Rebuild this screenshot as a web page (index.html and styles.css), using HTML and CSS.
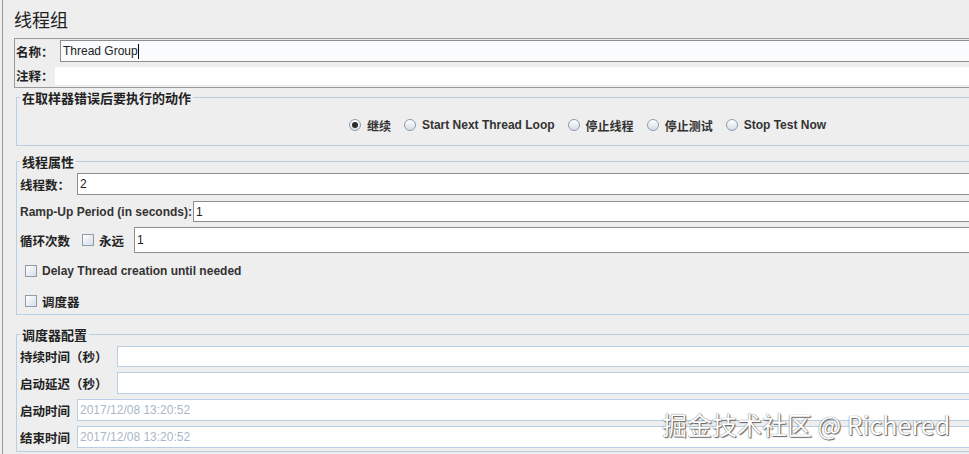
FILE: index.html
```html
<!DOCTYPE html>
<html lang="zh-CN">
  <head>
    <meta charset="UTF-8" />
    <meta name="viewport" content="width=device-width, initial-scale=1.0" />
    <title>线程组</title>
    <link rel="stylesheet" href="styles.css">
  </head>
  <body>
    <div class="frame">
      <h1 class="title">线程组</h1>

      <div class="names">
        <div class="names-row">
          <span class="lbl name-lbl">名称：</span>
          <div class="field name-field">Thread Group<span class="caret"></span></div>
        </div>
        <div class="names-row second">
          <span class="lbl note-lbl">注释：</span>
          <div class="field note-field"></div>
        </div>
      </div>

      <fieldset class="group on-error">
        <legend>在取样器错误后要执行的动作</legend>
        <div class="options">
          <div class="opt"><span class="radio on"></span>继续</div>
          <div class="opt"><span class="radio"></span>Start Next Thread Loop</div>
          <div class="opt"><span class="radio"></span>停止线程</div>
          <div class="opt"><span class="radio"></span>停止测试</div>
          <div class="opt"><span class="radio"></span>Stop Test Now</div>
        </div>
      </fieldset>

      <fieldset class="group props">
        <legend>线程属性</legend>
        <div class="row r1">
          <span class="lbl w57">线程数：</span>
          <div class="field">2</div>
        </div>
        <div class="row r2">
          <span class="lbl en w173">Ramp-Up Period (in seconds):</span>
          <div class="field">1</div>
        </div>
        <div class="row r3">
          <span class="lbl w62">循环次数</span>
          <span class="check"></span>
          <span class="lbl forever">永远</span>
          <div class="field">1</div>
        </div>
        <div class="row check-row r4">
          <span class="check"></span>
          <span class="lbl en">Delay Thread creation until needed</span>
        </div>
        <div class="row check-row r5">
          <span class="check"></span>
          <span class="lbl">调度器</span>
        </div>
      </fieldset>

      <fieldset class="group sched">
        <legend>调度器配置</legend>
        <div class="row s1">
          <span class="lbl w97">持续时间（秒）</span>
          <div class="field soft"></div>
        </div>
        <div class="row s2">
          <span class="lbl w97">启动延迟（秒）</span>
          <div class="field soft"></div>
        </div>
        <div class="row s2">
          <span class="lbl w57">启动时间</span>
          <div class="field soft dim">2017/12/08 13:20:52</div>
        </div>
        <div class="row s2">
          <span class="lbl w57">结束时间</span>
          <div class="field soft dim">2017/12/08 13:20:52</div>
        </div>
      </fieldset>
    </div>

    <div class="mark">掘金技术社区 @ Richered</div>
  </body>
</html>
```

FILE: styles.css
```css
body {
  margin: 0;
  background: #eeeeee;
  color: #333333;
  font-family: "Liberation Sans", "Noto Sans CJK SC", sans-serif;
  font-size: 12px;
  overflow: hidden;
}
.frame {
  margin-left: 2px;
  border-left: 1px solid #9a9a9a;
  padding-left: 11px;
  width: 1144px;
  min-height: 454px;
}
.title {
  margin: 0;
  padding-top: 7px;
  height: 24px;
  font-family: "Noto Sans CJK SC", sans-serif;
  font-size: 18px;
  font-weight: normal;
  line-height: 24px;
  color: #222222;
}

/* name / comment box */
.names {
  margin-top: 7px;
  border: 1px solid #9a9a9a;
  border-right: 0;
  padding: 1px 0 2px 0;
}
.names-row {
  display: flex;
  align-items: center;
}
.names-row.second {
  margin-top: 4px;
}
.lbl {
  font-weight: bold;
  font-size: 12.5px;
  white-space: nowrap;
  color: #222222;
}
.lbl.en {
  font-size: 12px;
  color: #333333;
}
.name-lbl {
  width: 44px;
  padding-left: 1px;
}
.note-lbl {
  width: 39px;
  padding-left: 1px;
}
.field {
  flex: 1;
  box-sizing: border-box;
  height: 100%;
  border: 1px solid #8e8e8e;
  border-right: 0;
  background: #ffffff;
  padding-left: 2px;
  color: #222222;
  display: flex;
  align-items: center;
}
.name-field {
  height: 22px;
  background: #f9fbfd;
}
.note-field {
  height: 18px;
  border: 0;
}
.caret {
  display: inline-block;
  width: 1px;
  height: 15px;
  background: #000000;
}

/* titled groups */
.group {
  margin: 0 0 0 2px;
  padding: 0;
  border: 1px solid #b8cfe5;
  border-right: 0;
  min-width: 0;
}
.group legend {
  margin-left: 3px;
  padding: 0 2px;
  font-family: "Noto Sans CJK SC", sans-serif;
  font-size: 13px;
  font-weight: bold;
  line-height: 15px;
  color: #222222;
}
.on-error {
  margin-top: 2px;
  padding-bottom: 10px;
}
.options {
  margin-top: 10px;
  height: 20px;
  display: flex;
  justify-content: center;
  align-items: center;
  gap: 13px;
}
.opt {
  display: flex;
  align-items: center;
  gap: 6px;
  font-weight: bold;
  color: #333333;
}
.radio {
  width: 12px;
  height: 12px;
  box-sizing: border-box;
  border-radius: 50%;
  border: 1px solid #8f9cab;
  background: linear-gradient(#ffffff, #d5dde6);
  display: flex;
  align-items: center;
  justify-content: center;
}
.radio.on::after {
  content: "";
  width: 6px;
  height: 6px;
  border-radius: 50%;
  background: #2b2b2b;
}
.check {
  width: 12px;
  height: 12px;
  box-sizing: border-box;
  border: 1px solid #8f9cab;
  background: linear-gradient(135deg, #ffffff, #d3dde8);
  flex: none;
}

.props {
  margin-top: 8px;
  padding-bottom: 4px;
}
.sched {
  margin-top: 12px;
  padding-bottom: 3px;
}
.row {
  display: flex;
  align-items: center;
  padding-left: 3px;
}
.w57 { width: 57px; }
.w62 { width: 62px; }
.w97 { width: 97px; }
.w173 { width: 173px; }
.r1 { margin-top: 4px; height: 22px; }
.r2 { margin-top: 6px; height: 21px; }
.r3 { margin-top: 5px; height: 26px; }
.r3 .forever {
  margin: 0 10px 0 5px;
}
.r4 { margin-top: 9px; height: 18px; }
.r5 { margin-top: 12px; height: 18px; }
.check-row {
  padding-left: 8px;
  gap: 5px;
}
.s1 { margin-top: 4px; height: 21px; }
.s2 { margin-top: 5px; height: 22px; }
.field.soft {
  border-color: #b8cfe5;
}
.field.dim {
  color: #a9b8c8;
}

/* watermark over the panel */
.mark {
  position: absolute;
  left: 662px;
  top: 406px;
  font-family: "Noto Sans CJK SC", sans-serif;
  font-size: 25px;
  color: #ffffff;
  white-space: nowrap;
  text-shadow: 0 0 1px #444444, 1px 1px 1px #666666;
}
```
